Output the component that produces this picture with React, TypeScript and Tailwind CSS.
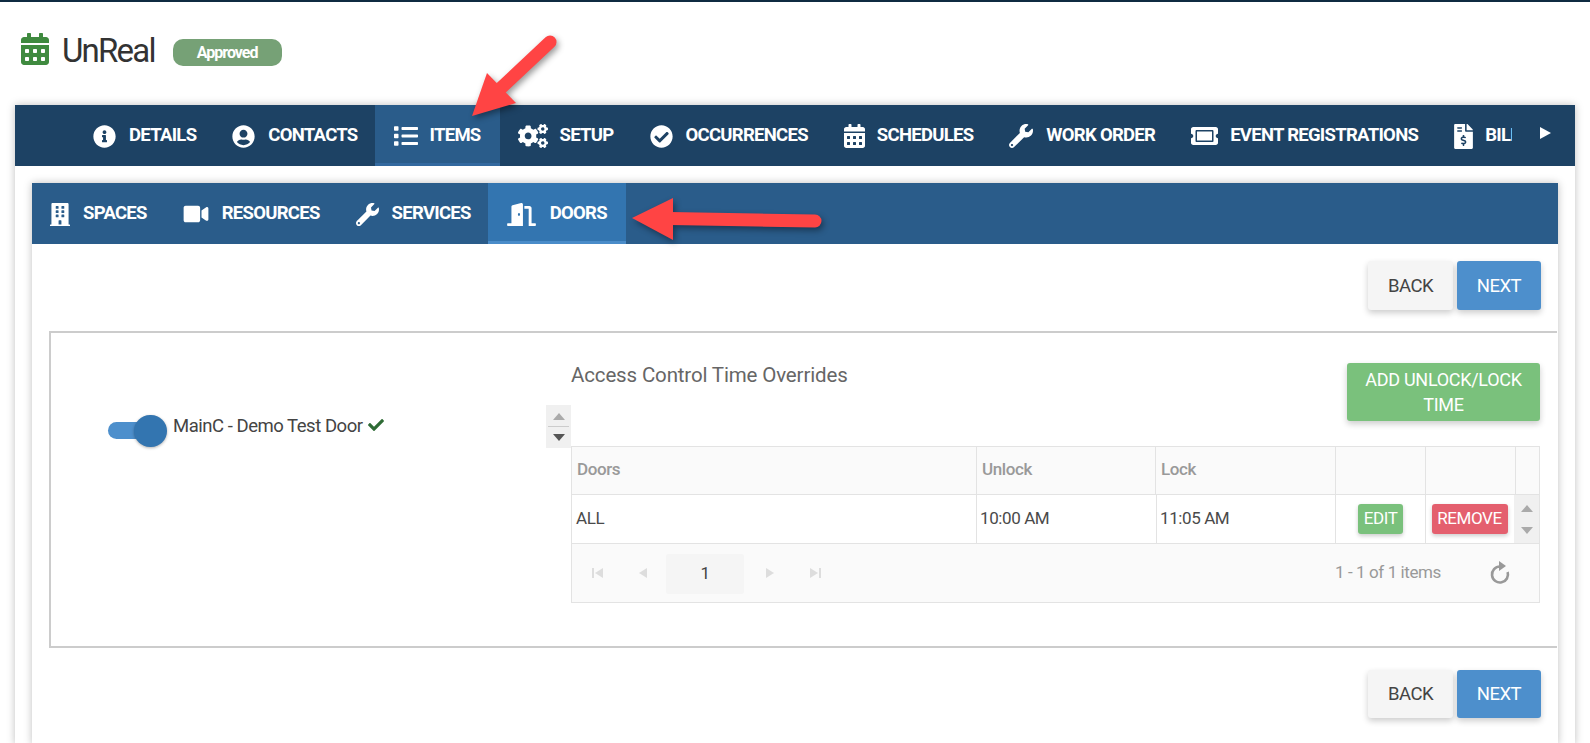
import type { ComponentType } from "react";
import {
  FaBuilding,
  FaCalendarAlt,
  FaCheck,
  FaCheckCircle,
  FaCogs,
  FaDoorOpen,
  FaFileInvoiceDollar,
  FaInfoCircle,
  FaList,
  FaTicketAlt,
  FaUserCircle,
  FaVideo,
  FaWrench,
} from "react-icons/fa";

type Tab = {
  label: string;
  icon: ComponentType<{ className?: string }>;
  iconClass: string;
  active?: boolean;
};

const mainTabs: Tab[] = [
  { label: "Details", icon: FaInfoCircle, iconClass: "w-[23px] h-[23px] mr-[13px]" },
  { label: "Contacts", icon: FaUserCircle, iconClass: "w-[23px] h-[23px] mr-[13px]" },
  { label: "Items", icon: FaList, iconClass: "w-[24px] h-[24px] mr-[12px]", active: true },
  { label: "Setup", icon: FaCogs, iconClass: "w-[30px] h-[24px] mr-[12px]" },
  { label: "Occurrences", icon: FaCheckCircle, iconClass: "w-[23px] h-[23px] mr-[13px]" },
  { label: "Schedules", icon: FaCalendarAlt, iconClass: "w-[21px] h-[24px] mr-[12px]" },
  { label: "Work Order", icon: FaWrench, iconClass: "w-[24px] h-[24px] mr-[13px]" },
  { label: "Event Registrations", icon: FaTicketAlt, iconClass: "w-[27px] h-[24px] mr-[12px]" },
  { label: "Billing", icon: FaFileInvoiceDollar, iconClass: "w-[19px] h-[25px] mr-[12px]" },
];

const subTabs: Tab[] = [
  { label: "Spaces", icon: FaBuilding, iconClass: "w-[20px] h-[23px] mr-[13px]" },
  { label: "Resources", icon: FaVideo, iconClass: "w-[26px] h-[22px] mr-[13px]" },
  { label: "Services", icon: FaWrench, iconClass: "w-[23px] h-[23px] mr-[13px]" },
  { label: "Doors", icon: FaDoorOpen, iconClass: "w-[29px] h-[23px] mr-[14px]", active: true },
];

function TabItem({ tab, activeClass }: { tab: Tab; activeClass: string }) {
  const Icon = tab.icon;
  return (
    <div
      className={`flex items-center shrink-0 h-full px-[18px] pt-[4px] border-b-[3px] ${
        tab.active ? activeClass : "border-transparent"
      }`}
    >
      <Icon className={`shrink-0 ${tab.iconClass}`} />
      <span className="text-[18.5px] font-bold uppercase tracking-[-0.72px] whitespace-nowrap">{tab.label}</span>
    </div>
  );
}

function NavButtons({ heightClass }: { heightClass: string }) {
  return (
    <div className="flex justify-end gap-[4px] pr-[17px]">
      <button className={`w-[85px] ${heightClass} pt-[2px] bg-[#f5f5f5] text-[#444] text-[18.5px] tracking-[-0.5px] rounded-[3px] shadow-[0_3px_6px_rgba(0,0,0,0.2)]`}>
        BACK
      </button>
      <button className={`w-[84px] ${heightClass} pt-[2px] bg-[#4d8fcc] text-white text-[18.5px] tracking-[-0.5px] rounded-[3px] shadow-[0_3px_6px_rgba(0,0,0,0.2)]`}>
        NEXT
      </button>
    </div>
  );
}

function Triangle({ dir, color }: { dir: "up" | "down"; color: string }) {
  return (
    <svg width="12" height="7" viewBox="0 0 12 7" className="block">
      <polygon points={dir === "up" ? "0,7 6,0 12,7" : "0,0 12,0 6,7"} fill={color} />
    </svg>
  );
}

function PagerIcon({ dir, bar }: { dir: "left" | "right"; bar?: boolean }) {
  return (
    <svg width="12" height="12" viewBox="0 0 12 12" className="block">
      {dir === "left" ? (
        <>
          {bar && <rect x="0" y="1" width="2" height="10" fill="#ddd" />}
          <polygon points="11,1 11,11 3,6" fill="#ddd" />
        </>
      ) : (
        <>
          <polygon points="1,1 1,11 9,6" fill="#ddd" />
          {bar && <rect x="10" y="1" width="2" height="10" fill="#ddd" />}
        </>
      )}
    </svg>
  );
}

export default function App() {
  return (
    <div className="relative w-[1590px] h-[743px] overflow-hidden bg-white font-['Roboto',sans-serif]">
      <div className="h-[2px] bg-[#0f2b41]" />

      {/* title */}
      <div className="flex items-center h-[103px] pl-[21px] pb-[10px]">
        <FaCalendarAlt className="w-[28px] h-[32px] text-[#3f8a3f]" />
        <span className="ml-[13px] mt-[4px] text-[33px] text-[#333] tracking-[-1.8px]">UnReal</span>
        <span className="ml-[18px] mt-[8px] w-[109px] h-[27px] rounded-[10px] bg-[#76a176] flex items-center justify-center text-white text-[16px] font-bold tracking-[-1px]">
          Approved
        </span>
      </div>

      <div className="mx-[15px] h-[640px] shadow-[0_0_8px_rgba(0,0,0,0.25)]">
        {/* main nav */}
        <div className="flex items-center h-[61px] bg-[#1d4264] text-white pl-[60px]">
          <div className="flex h-full w-[1437px] overflow-hidden">
            {mainTabs.map((tab) => (
              <TabItem key={tab.label} tab={tab} activeClass="bg-[#2a5c8a] border-[#33699f] -ml-[1px] pl-[19px] pr-[19px]" />
            ))}
          </div>
          <svg width="11" height="12" viewBox="0 0 11 12" className="ml-[28px] mb-[5px]">
            <polygon points="0,0 11,6 0,12" fill="#fff" />
          </svg>
        </div>

        <div className="px-[17px] pt-[17px] h-[579px]">
          <div className="h-full shadow-[0_0_8px_rgba(0,0,0,0.25)]">
            {/* sub nav */}
            <div className="flex h-[61px] bg-[#2a5c8a] text-white">
              {subTabs.map((tab) => (
                <TabItem key={tab.label} tab={tab} activeClass="bg-[#3375b0] border-[#4a8cc9] -ml-[1px] pl-[19px] pr-[19px]" />
              ))}
            </div>

            <div className="pt-[17px]">
              <NavButtons heightClass="h-[49px]" />

              <div className="flex mt-[21px] ml-[17px] mr-[1px] h-[317px] border-2 border-r-0 border-[#ccc]">
                <div className="flex items-start w-[520px] pt-[72px] shrink-0">
                  <div className="flex items-start ml-[57px] mt-[10px]">
                    <div className="w-[40px] h-[17px] mt-[7px] rounded-full bg-[#4d8fcc]" />
                    <div className="w-[33px] h-[32px] -ml-[14px] rounded-full bg-[#3375b0] shadow-[0_1px_3px_rgba(0,0,0,0.3)]" />
                    <span className="ml-[6px] -mt-[1px] text-[18.5px] tracking-[-0.47px] text-[#444] leading-[24px] whitespace-nowrap">
                      MainC - Demo Test Door
                    </span>
                    <FaCheck className="ml-[4px] mt-[2px] w-[18px] h-[16px] text-[#2e6b35]" />
                  </div>
                  <div className="ml-auto w-[25px] h-[43px] bg-[#f0f0f0] flex flex-col items-center justify-center">
                    <div className="pb-[6px] border-b border-[#ccc] w-[21px] flex justify-center">
                      <Triangle dir="up" color="#aaa" />
                    </div>
                    <div className="pt-[7px]">
                      <Triangle dir="down" color="#555" />
                    </div>
                  </div>
                </div>

                <div className="w-[969px] pt-[30px] shrink-0">
                  <div className="flex justify-between items-start">
                    <span className="text-[20.5px] leading-[24px] tracking-[-0.15px] text-[#666]">
                      Access Control Time Overrides
                    </span>
                    <button className="w-[193px] h-[58px] bg-[#7ac17c] text-white text-[18px] tracking-[-0.3px] leading-[25px] rounded-[3px] px-[10px] shadow-[0_3px_6px_rgba(0,0,0,0.2)]">
                      ADD UNLOCK/LOCK TIME
                    </button>
                  </div>

                  {/* table */}
                  <div className="mt-[25px] border border-[#e3e3e3] text-[17px] tracking-[-0.4px]">
                    <div className="grid grid-cols-[405px_179px_180px_90px_90px_1fr] h-[48px] bg-[#fafafa] border-b border-[#e3e3e3] font-medium text-[#999]">
                      <div className="flex items-center pl-[5px] pb-[2px] border-r border-[#e3e3e3]">Doors</div>
                      <div className="flex items-center pl-[5px] pb-[2px] border-r border-[#e3e3e3]">Unlock</div>
                      <div className="flex items-center pl-[5px] pb-[2px] border-r border-[#e3e3e3]">Lock</div>
                      <div className="border-r border-[#e3e3e3]" />
                      <div className="border-r border-[#e3e3e3]" />
                      <div />
                    </div>
                    <div className="grid grid-cols-[405px_180px_179px_90px_88px_1fr] h-[49px] border-b border-[#e3e3e3] text-[#4a4a4a]">
                      <div className="flex items-center pl-[4px] border-r border-[#e3e3e3]">ALL</div>
                      <div className="flex items-center pl-[3px] border-r border-[#e3e3e3]">10:00 AM</div>
                      <div className="flex items-center pl-[3px] border-r border-[#e3e3e3]">11:05 AM</div>
                      <div className="flex items-center justify-center border-r border-[#e3e3e3]">
                        <button className="w-[45px] h-[30px] bg-[#7ac17c] text-white rounded-[3px] shadow-[0_2px_4px_rgba(0,0,0,0.2)]">
                          EDIT
                        </button>
                      </div>
                      <div className="flex items-center justify-center pr-[1px]">
                        <button className="w-[76px] h-[30px] bg-[#e45f6e] text-white rounded-[3px] shadow-[0_2px_4px_rgba(0,0,0,0.2)]">
                          REMOVE
                        </button>
                      </div>
                      <div className="flex flex-col items-center justify-center gap-[15px] bg-[#f0f0f0]">
                        <Triangle dir="up" color="#aaa" />
                        <Triangle dir="down" color="#aaa" />
                      </div>
                    </div>
                    <div className="flex items-center h-[58px] bg-[#fafafa] pl-[4px] pr-[28px]">
                      <div className="w-[44px] flex justify-center"><PagerIcon dir="left" bar /></div>
                      <div className="w-[44px] flex justify-center"><PagerIcon dir="left" /></div>
                      <div className="ml-[2px] mt-[1px] w-[78px] h-[40px] rounded-[2px] bg-[#f5f5f5] flex items-center justify-center text-[#444]">1</div>
                      <div className="ml-[5px] w-[44px] flex justify-center"><PagerIcon dir="right" /></div>
                      <div className="w-[44px] flex justify-center"><PagerIcon dir="right" bar /></div>
                      <span className="ml-auto text-[#999]">1 - 1 of 1 items</span>
                      <svg width="22" height="24" viewBox="0 0 22 24" className="ml-[48px]">
                        <path d="M11 5.5a8 8 0 1 0 7.6 5.5" fill="none" stroke="#999" strokeWidth="2.6" />
                        <polygon points="10,0 10,10 17,5" fill="#999" />
                      </svg>
                    </div>
                  </div>
                </div>
              </div>

              <div className="mt-[22px]">
                <NavButtons heightClass="h-[48px]" />
              </div>
            </div>
          </div>
        </div>
      </div>

      {/* red annotation arrows */}
      <svg className="absolute inset-0 pointer-events-none drop-shadow-[2px_3px_3px_rgba(0,0,0,0.4)]" width="1590" height="743">
        <line x1="501" y1="88" x2="550" y2="42" stroke="#ff4444" strokeWidth="13" strokeLinecap="round" />
        <polygon points="472,116 487,73 516,103" fill="#ff4444" />
        <line x1="670" y1="218.5" x2="815" y2="221" stroke="#ff4444" strokeWidth="13" strokeLinecap="round" />
        <polygon points="632,218 673,198 673,240" fill="#ff4444" />
      </svg>
    </div>
  );
}
